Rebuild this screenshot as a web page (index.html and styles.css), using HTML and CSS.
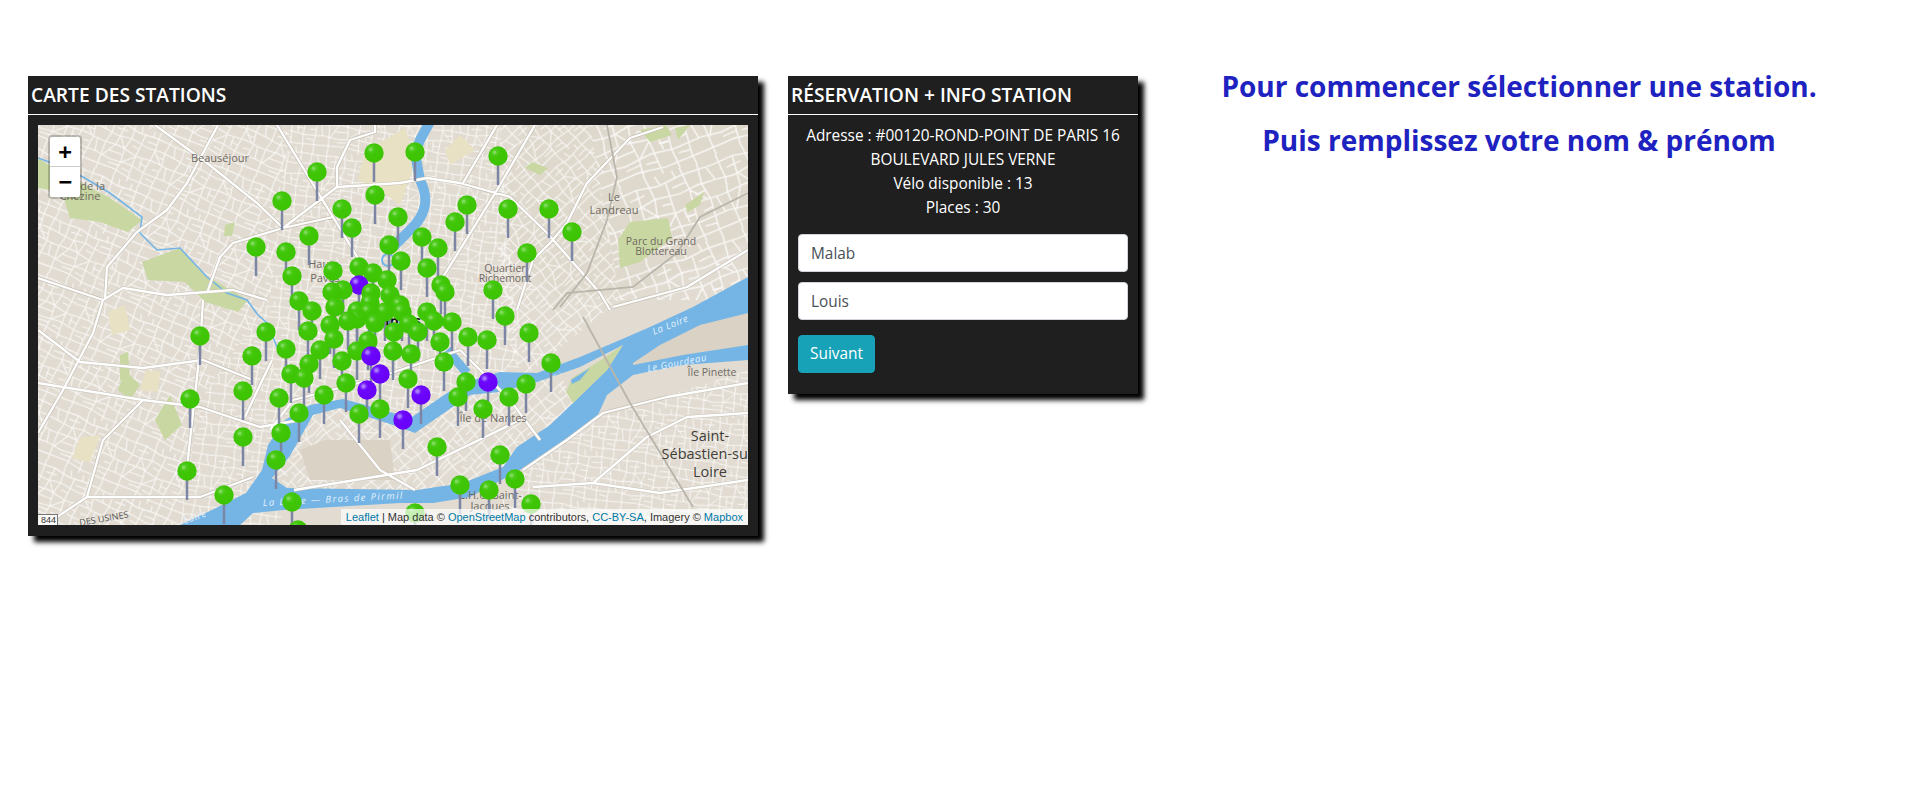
FILE: index.html
```html
<!DOCTYPE html>
<html lang="fr">
<head>
<meta charset="utf-8">
<title>Stations</title>
<link rel="stylesheet" href="styles.css">
</head>
<body>
<main class="page">
  <section class="panel panel-map">
    <h2 class="panel-title">CARTE DES STATIONS</h2>
    <div class="map">
      <svg class="map-art" viewBox="38 125 710 400" width="710" height="400" xmlns="http://www.w3.org/2000/svg">
        <defs>
          <path id="tile" d="M0 14L38 11L74 17L118 12L170 14M0 39L30 42L62 36L104 41L136 37L170 39M0 66L44 62L90 69L128 64L170 66M0 94L34 98L82 92L120 97L170 94M0 118L52 115L98 121L170 118M12 0L15 42L10 66L14 130M38 11L34 62M58 0L62 36L56 64L60 94L57 130M88 17L86 69L90 130M118 0L122 41L117 97L120 130M148 0L144 38L150 66L146 118L148 130M22 26L48 24M70 50L88 52M96 28L120 26M128 52L148 50M24 80L58 78M100 80L118 82M132 82L150 80M34 106L58 104M68 106L88 108M126 106L146 108M38 42L56 64M122 41L146 66M62 94L88 69M14 98L34 62M160 14L168 39M160 66L166 94M74 0L78 15M102 69L104 92M104 0L106 13"/>
          <pattern id="st-a" width="170" height="130" patternUnits="userSpaceOnUse" patternTransform="rotate(24) scale(.44)"><use href="#tile" class="street"/></pattern>
          <pattern id="st-b" width="170" height="130" patternUnits="userSpaceOnUse" patternTransform="rotate(-42) scale(.42)"><use href="#tile" class="street"/></pattern>
          <pattern id="st-c" width="170" height="130" patternUnits="userSpaceOnUse" patternTransform="rotate(-20) scale(.6)"><use href="#tile" class="street"/></pattern>
          <pattern id="st-d" width="170" height="130" patternUnits="userSpaceOnUse" patternTransform="rotate(8) scale(.4)"><use href="#tile" class="street"/></pattern>
          <radialGradient id="gg" cx=".35" cy=".3" r=".75"><stop offset="0" stop-color="#5ed233"/><stop offset=".35" stop-color="#40c608"/><stop offset="1" stop-color="#3cc300"/></radialGradient>
          <radialGradient id="gp" cx=".32" cy=".3" r=".75"><stop offset="0" stop-color="#9966ff"/><stop offset=".3" stop-color="#6c08fb"/><stop offset="1" stop-color="#6800f8"/></radialGradient>
          <g id="pg"><rect x="-1.25" y="0" width="2.5" height="29" class="stalk"/><circle r="9.7" fill="url(#gg)"/><circle cx="-3.5" cy="-3.5" r="2" class="shine"/></g>
          <g id="pp"><rect x="-1.25" y="0" width="2.5" height="29" class="stalk"/><circle r="9.7" fill="url(#gp)"/><circle cx="-3.5" cy="-3.5" r="2.2" class="shine"/></g>
        </defs>

        <rect x="38" y="125" width="710" height="400" class="land"/>
        <path class="tan" d="M520 125H748V240L640 290L560 300L500 240Z"/>
        <path fill="url(#st-a)" d="M38 125H290L270 300L200 400L180 525H38Z"/>
        <path fill="url(#st-d)" d="M290 125L270 300L200 400L180 525H270L420 420L520 380L500 125Z"/>
        <path fill="url(#st-b)" d="M500 125H590L620 300L520 380L500 300Z"/>
        <path fill="url(#st-c)" d="M590 125H748V300L620 300Z"/>
        <path fill="url(#st-d)" d="M560 430L748 370V525H480Z"/>

        <path class="park" d="M38 158L60 172L110 198L142 220L128 232L100 222L70 218L62 192L38 188Z"/>
        <path class="park" d="M142 262L180 248L205 275L248 300L238 312L205 302L185 282L148 280Z"/>
        <path class="park" d="M630 222L668 218L672 238L640 262L620 268L618 240Z"/>
        <path class="park" d="M640 130L666 125L672 135L650 142Z M675 128L690 125L678 140Z M532 162L548 168L540 175L525 168Z M685 205L704 192L700 205L688 212Z M120 355L128 352L130 378L120 380Z M125 370L140 385L130 400L118 390Z M170 395L182 425L165 440L155 420Z M225 225L235 222L232 236L224 236Z"/>
        <path class="sand" d="M385 140L405 128L416 160L400 205L380 190L358 180L365 150Z M445 150L460 135L475 150L450 165Z M146 370L160 372L158 392L140 390Z M80 438L100 435L90 462L72 458Z M108 312L125 305L130 330L112 335Z"/>

        <path class="stream" d="M38 158L60 166L83 177L110 193L142 217L140 233L157 250L180 248L207 277L227 293L247 300L258 315L267 323L277 347"/>
        <path class="water" d="M180 525L212 510L246 493L262 470L268 445L285 420L310 405L343 399L362 404L393 413L412 417L447 393L473 380L500 372L537 373L580 357L620 340L650 327L693 307L748 277V360L683 365L647 372L633 375L607 395L597 417L567 438L520 470L470 497L433 503L400 503L283 510L253 513L240 525Z"/>
        <path class="water-line" d="M432 118L420 140L415 153L420 180C430 200 425 215 412 228L392 248"/>
        <path class="water-line thin" d="M447 350L467 373"/>
        <circle cx="388" cy="260" r="6" class="water-ring"/>

        <path class="land" d="M290 456L313 415L340 408L393 425L415 433L470 395L500 392L537 382L580 367L623 345L607 370L573 403L550 425L517 447L503 467L463 483L417 490L287 488L272 478Z"/>
        <path fill="url(#st-b)" d="M290 456L313 415L340 408L393 425L415 433L470 395L500 392L537 382L560 372L573 403L550 425L517 447L503 467L463 483L417 490L287 488L272 478Z"/>
        <path class="park" d="M623 345L607 370L573 403L566 392L572 378L598 362Z"/>
        <path class="tan-dark" d="M633 363L660 345L700 325L748 313V345L683 355L633 365Z"/>
        <path class="tan-dark" d="M300 450L325 440H390L395 480H310Z"/>
        <path class="water" d="M571 380L590 368L580 380L572 384Z"/>

        <g class="road-case">
          <path id="r1" d="M155 125L207 163L257 203L283 228L333 217M218 125L187 183L167 210L137 232L107 267L105 300M277 125L333 217L367 273M375 125V132L350 140L337 167V187L283 228L233 243L220 257L207 293M337 187L400 183L427 178L460 183L510 197L547 233L600 293L610 310M497 125L463 183M535 125L497 190L443 277M663 127L630 138L587 183L567 223L550 243L533 260L517 310M38 278L103 300L123 288L167 295L233 290L267 300M38 330L80 362L143 368L203 360L253 380M38 383L143 400L200 407L260 427L300 420M103 300L93 333L63 390L38 433M203 300L200 350L190 440L187 467M143 400L103 440L87 497L57 517M87 497L200 497L253 477M272 360L260 385L245 417M523 470L567 440L603 413L667 397L748 383M748 413L687 417L647 437L593 483L533 487M593 483L660 493L748 480M748 250L687 287L613 307M294 490L417 470L520 420M340 420L380 470L415 490M270 430L293 400L370 380L460 350M460 350L510 400L540 440"/>
        </g>
        <g class="road"><use href="#r1"/></g>
        <path class="rail" d="M607 125L617 177L607 220L587 273L560 307M748 193L700 217L677 253L633 287L567 293L553 310M583 317L630 403L693 507"/>

        <text x="220" y="162" class="lbl">Beauséjour</text>
        <text x="80" y="190" class="lbl">Parc de la</text>
        <text x="80" y="200" class="lbl">Chézine</text>
        <text x="325" y="268" class="lbl">Hauts-</text>
        <text x="325" y="282" class="lbl">Pavés</text>
        <text x="614" y="201" class="lbl">Le</text>
        <text x="614" y="214" class="lbl">Landreau</text>
        <text x="661" y="245" class="lbl sm">Parc du Grand</text>
        <text x="661" y="255" class="lbl sm">Blottereau</text>
        <text x="505" y="272" class="lbl sm">Quartier</text>
        <text x="505" y="282" class="lbl sm">Richemont</text>
        <text x="712" y="376" class="lbl sm">Île Pinette</text>
        <text x="493" y="422" class="lbl">Île de Nantes</text>
        <text x="710" y="441" class="city">Saint-</text>
        <text x="710" y="459" class="city">Sébastien-sur-</text>
        <text x="710" y="477" class="city">Loire</text>
        <text x="490" y="499" class="lbl">C.H.U. Saint-</text>
        <text x="490" y="510" class="lbl">Jacques</text>
        <text x="395" y="326" class="city dark">Nantes</text>
        <text x="0" y="0" class="river" transform="translate(654 335) rotate(-22)">La Loire</text>
        <text x="0" y="0" class="river" transform="translate(648 372) rotate(-11)">Le Gourdeau</text>
        <text x="0" y="0" class="river wide" transform="translate(263 506) rotate(-3)">La Loire — Bras de Pirmil</text>
        <text x="0" y="0" class="river" transform="translate(185 524) rotate(-20)">Loire</text>
        <text x="0" y="0" class="lbl-up" transform="translate(80 526) rotate(-10)">DES USINES</text>

        <use href="#pg" x="415" y="152"/><use href="#pg" x="374" y="153"/><use href="#pg" x="498" y="156"/><use href="#pg" x="317" y="172"/>
        <use href="#pg" x="375" y="195"/><use href="#pg" x="282" y="201"/><use href="#pg" x="467" y="205"/><use href="#pg" x="342" y="209"/>
        <use href="#pg" x="508" y="209"/><use href="#pg" x="549" y="209"/><use href="#pg" x="398" y="217"/><use href="#pg" x="455" y="222"/>
        <use href="#pg" x="352" y="228"/><use href="#pg" x="572" y="232"/><use href="#pg" x="309" y="236"/><use href="#pg" x="422" y="237"/>
        <use href="#pg" x="389" y="245"/><use href="#pg" x="256" y="247"/><use href="#pg" x="438" y="248"/><use href="#pg" x="286" y="252"/>
        <use href="#pg" x="527" y="253"/><use href="#pg" x="401" y="261"/><use href="#pg" x="359" y="267"/><use href="#pg" x="427" y="268"/>
        <use href="#pg" x="333" y="271"/><use href="#pg" x="373" y="273"/><use href="#pg" x="292" y="276"/><use href="#pg" x="387" y="280"/>
        <use href="#pp" x="359" y="285"/><use href="#pg" x="441" y="285"/><use href="#pg" x="343" y="290"/><use href="#pg" x="493" y="290"/>
        <use href="#pg" x="332" y="292"/><use href="#pg" x="445" y="292"/><use href="#pg" x="371" y="293"/><use href="#pg" x="390" y="295"/>
        <use href="#pg" x="299" y="301"/><use href="#pg" x="370" y="303"/><use href="#pg" x="400" y="305"/><use href="#pg" x="335" y="307"/>
        <use href="#pg" x="312" y="311"/><use href="#pg" x="357" y="311"/><use href="#pg" x="385" y="312"/><use href="#pg" x="369" y="312"/>
        <use href="#pg" x="402" y="312"/><use href="#pg" x="427" y="312"/><use href="#pg" x="505" y="316"/><use href="#pg" x="357" y="319"/>
        <use href="#pg" x="348" y="321"/><use href="#pg" x="434" y="321"/><use href="#pg" x="452" y="322"/><use href="#pg" x="375" y="323"/>
        <use href="#pg" x="409" y="324"/><use href="#pg" x="330" y="325"/><use href="#pg" x="308" y="331"/><use href="#pg" x="266" y="332"/>
        <use href="#pg" x="394" y="332"/><use href="#pg" x="418" y="332"/><use href="#pg" x="529" y="333"/><use href="#pg" x="200" y="336"/>
        <use href="#pg" x="468" y="337"/><use href="#pg" x="334" y="339"/><use href="#pg" x="487" y="340"/><use href="#pg" x="368" y="341"/>
        <use href="#pg" x="440" y="342"/><use href="#pg" x="286" y="349"/><use href="#pg" x="320" y="350"/><use href="#pg" x="393" y="351"/>
        <use href="#pg" x="357" y="351"/><use href="#pg" x="411" y="354"/><use href="#pp" x="371" y="356"/><use href="#pg" x="252" y="356"/>
        <use href="#pg" x="342" y="361"/><use href="#pg" x="444" y="362"/><use href="#pg" x="551" y="363"/><use href="#pg" x="309" y="364"/>
        <use href="#pg" x="291" y="374"/><use href="#pp" x="380" y="374"/><use href="#pg" x="304" y="378"/><use href="#pg" x="408" y="379"/>
        <use href="#pp" x="488" y="382"/><use href="#pg" x="466" y="382"/><use href="#pg" x="346" y="383"/><use href="#pg" x="526" y="384"/>
        <use href="#pp" x="367" y="390"/><use href="#pg" x="243" y="391"/><use href="#pg" x="324" y="395"/><use href="#pp" x="421" y="395"/>
        <use href="#pg" x="509" y="397"/><use href="#pg" x="458" y="397"/><use href="#pg" x="279" y="398"/><use href="#pg" x="190" y="399"/>
        <use href="#pg" x="380" y="409"/><use href="#pg" x="483" y="409"/><use href="#pg" x="299" y="413"/><use href="#pg" x="359" y="414"/>
        <use href="#pp" x="403" y="420"/><use href="#pg" x="281" y="433"/><use href="#pg" x="243" y="437"/><use href="#pg" x="437" y="447"/>
        <use href="#pg" x="500" y="455"/><use href="#pg" x="276" y="460"/><use href="#pg" x="187" y="471"/><use href="#pg" x="515" y="479"/>
        <use href="#pg" x="460" y="485"/><use href="#pg" x="489" y="490"/><use href="#pg" x="224" y="495"/><use href="#pg" x="292" y="502"/>
        <use href="#pg" x="531" y="504"/><use href="#pg" x="415" y="513"/><use href="#pg" x="298" y="530"/>
      </svg>

      <div class="zoom">
        <a class="zoom-btn">+</a>
        <a class="zoom-btn">−</a>
      </div>
      <div class="scale"><span>844</span></div>
      <div class="attribution"><a>Leaflet</a> | Map data © <a>OpenStreetMap</a> contributors, <a>CC-BY-SA</a>, Imagery © <a>Mapbox</a></div>
    </div>
  </section>

  <section class="panel panel-form">
    <h2 class="panel-title">RÉSERVATION + INFO STATION</h2>
    <div class="panel-body">
      <p class="info">Adresse : #00120-ROND-POINT DE PARIS 16 BOULEVARD JULES VERNE<br>Vélo disponible : 13<br>Places : 30</p>
      <form class="form">
        <input class="field" type="text" value="Malab">
        <input class="field" type="text" value="Louis">
        <button class="btn" type="button">Suivant</button>
      </form>
    </div>
  </section>

  <section class="intro">
    <h3 class="intro-line">Pour commencer sélectionner une station.</h3>
    <h3 class="intro-line">Puis remplissez votre nom &amp; prénom</h3>
  </section>
</main>
</body>
</html>
```

FILE: styles.css
```css
* { box-sizing: border-box; }
html, body { margin: 0; padding: 0; background: #fff; }
body { font-family: "Open Sans", "Noto Sans", sans-serif; font-size: 15.4px; color: #fff; }

.page { display: flex; align-items: flex-start; padding: 76px 20px 0 28px; width: 1920px; height: 800px; overflow: hidden; }

.panel { background: #1f1f1f; box-shadow: 6px 6px 5px #000; flex: none; }
.panel-map { width: 730px; height: 460px; margin-right: 30px; }
.panel-form { width: 350px; height: 318px; }
.panel-title { margin: 0; height: 39px; padding: 0 3px; border-bottom: 1px solid #fff; font-size: 19.2px; font-weight: 600; line-height: 37px; color: #fff; white-space: nowrap; }

.map { position: relative; width: 710px; height: 400px; margin: 10px; overflow: hidden; }
.map-art { display: block; }

.land { fill: #e1dbd1; }
.tan { fill: #dfd9cd; }
.tan-dark { fill: #dad2c4; }
.park { fill: #c9d8a2; }
.sand { fill: #e9e1c4; }
.street { fill: none; stroke: #fff; stroke-width: 2.4; opacity: .8; }
.stream { fill: none; stroke: #74b5e6; stroke-width: 1.6; }
.water { fill: #74b5e6; }
.water-line { fill: none; stroke: #74b5e6; stroke-width: 10; stroke-linejoin: round; }
.water-line.thin { stroke-width: 9; }
.water-ring { fill: none; stroke: #74b5e6; stroke-width: 2; }
.road-case { fill: none; stroke: #c6c0b6; stroke-width: 3.6; stroke-linejoin: round; }
.road { fill: none; stroke: #fff; stroke-width: 2.3; stroke-linejoin: round; }
.rail { fill: none; stroke: #bab5ab; stroke-width: 1.8; }

.lbl, .city, .river, .lbl-up { font-family: "Open Sans", "Noto Sans", sans-serif; }
.lbl { font-size: 11px; fill: #6f6a63; text-anchor: middle; }
.lbl.sm { font-size: 10.5px; }
.lbl-up { font-size: 9px; fill: #555; }
.city { font-size: 14.5px; font-weight: 500; fill: #3f3d3a; text-anchor: middle; }
.city.dark { font-weight: 700; fill: #111; }
.river { font-size: 9.5px; font-style: italic; fill: #e3f1fb; letter-spacing: .6px; }
.river.wide { letter-spacing: 1.4px; }

.stalk { fill: #7c86a4; }
.shine { fill: #fff; opacity: .22; }

.zoom { position: absolute; top: 10px; left: 10px; display: flex; flex-direction: column; border: 2px solid rgba(0, 0, 0, .2); border-radius: 4px; background-clip: padding-box; }
.zoom-btn { display: block; width: 30px; height: 30px; background: #fff; color: #000; font: bold 22px/30px "DejaVu Sans Mono", "Liberation Mono", monospace; text-align: center; }
.zoom-btn:first-child { border-bottom: 1px solid #ccc; border-radius: 2px 2px 0 0; }
.zoom-btn:last-child { border-radius: 0 0 2px 2px; }

.scale { position: absolute; left: 0; bottom: 0; width: 20px; height: 11px; overflow: hidden; display: flex; justify-content: flex-end; padding-right: 1px; background: rgba(255, 255, 255, .8); border: 1px solid #777; border-left: 0; border-bottom: 0; font: 9px/11px "Liberation Sans", sans-serif; color: #333; }

.attribution { position: absolute; right: 0; bottom: 0; height: 16px; padding: 0 5px; background: rgba(255, 255, 255, .7); font: 11px/16px "Liberation Sans", Arial, sans-serif; color: #333; white-space: nowrap; }
.attribution a { color: #0078a8; }

.panel-body { padding: 9px 10px 0; }
.info { margin: 0 0 14px; font-size: 15.4px; line-height: 24px; text-align: center; }
.form { display: flex; flex-direction: column; align-items: flex-start; }
.field { width: 330px; height: 38px; margin-bottom: 10px; padding: 6px 12px; border: 1px solid #ced4da; border-radius: 4px; background: #fff; color: #495057; font: 15.4px/24px "Open Sans", "Noto Sans", sans-serif; }
.btn { height: 38px; width: 77px; margin-top: 5px; padding: 0; border: 1px solid #17a2b8; border-radius: 4px; background: #17a2b8; color: #fff; font: 15.4px/24px "Open Sans", "Noto Sans", sans-serif; }

.intro { flex: 1; min-width: 0; display: flex; flex-direction: column; align-items: center; margin-top: -9px; }
.intro-line { margin: 0 0 16px; font-size: 28px; font-weight: 700; line-height: 38px; color: #1e22c0; white-space: nowrap; }
```
